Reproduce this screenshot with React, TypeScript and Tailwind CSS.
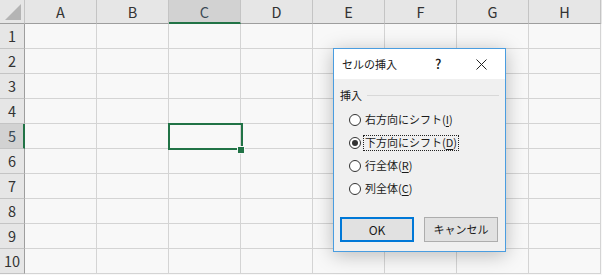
import React from "react"

const COLUMNS = ["A", "B", "C", "D", "E", "F", "G", "H"]
const ROWS = [1, 2, 3, 4, 5, 6, 7, 8, 9, 10]

const OPTIONS = [
  { label: "右方向にシフト", key: "I", checked: false },
  { label: "下方向にシフト", key: "D", checked: true },
  { label: "行全体", key: "R", checked: false },
  { label: "列全体", key: "C", checked: false },
]

const FONT = "font-['Noto_Sans_CJK_JP','Noto_Sans',sans-serif]"

function ColumnHeader({ name }: { name: string }) {
  const active = name === "C"
  return (
    <div
      className={
        active
          ? "flex h-full w-[72px] shrink-0 items-center justify-center border-r border-r-[#c4c4c4] border-b-2 border-b-[#217346] bg-[#d2d2d2] pt-[2px] text-[14.5px] text-[#3b4a55]"
          : "flex h-full w-[72px] shrink-0 items-center justify-center border-r border-r-[#c4c4c4] border-b border-b-[#9e9e9e] text-[14.5px] text-[#333]"
      }
    >
      {name}
    </div>
  )
}

function Sheet() {
  return (
    <div className={`flex flex-col bg-[#f8f8f8] ${FONT}`}>
      {/* column headers */}
      <div className="flex h-[24px] bg-[#e6e6e6]">
        <div className="flex h-full w-[25px] shrink-0 items-end justify-end border-r border-b border-r-[#c4c4c4] border-b-[#9e9e9e] pr-[2px] pb-[2px]">
          <svg width="17" height="17" viewBox="0 0 17 17">
            <polygon points="16,0 16,16 0,16" fill="#b4b4b4" />
          </svg>
        </div>
        {COLUMNS.map((c) => (
          <ColumnHeader key={c} name={c} />
        ))}
      </div>

      {/* rows */}
      {ROWS.map((r) => {
        const active = r === 5
        return (
          <div key={r} className="flex h-[25px]">
            <div
              className={
                active
                  ? "flex h-full w-[25px] shrink-0 items-center justify-center border-b border-b-[#c4c4c4] border-r-2 border-r-[#217346] bg-[#d2d2d2] pl-[1px] text-[14.5px] text-[#3b4a55]"
                  : "flex h-full w-[25px] shrink-0 items-center justify-center border-b border-b-[#c4c4c4] border-r border-r-[#9e9e9e] bg-[#e6e6e6] text-[14.5px] text-[#333]"
              }
            >
              {r}
            </div>
            {COLUMNS.map((c) => (
              <div key={c} className="h-full w-[72px] shrink-0 border-r border-b border-[#d4d4d4]" />
            ))}
          </div>
        )
      })}
    </div>
  )
}

function Radio({ checked }: { checked: boolean }) {
  return (
    <span className="flex h-[12px] w-[12px] shrink-0 items-center justify-center rounded-full border border-[#333] bg-white">
      {checked && <span className="h-[6px] w-[6px] rounded-full bg-[#333]" />}
    </span>
  )
}

function InsertDialog() {
  return (
    <div
      className={`absolute left-[333px] top-[48px] flex h-[204px] w-[173px] flex-col border border-[#4a9de0] bg-[#f0f0f0] text-[11px] text-[#1a1a1a] shadow-[0_3px_18px_rgba(0,0,0,0.25)] ${FONT}`}
    >
      {/* title bar */}
      <div className="flex h-[30px] items-center bg-white pl-[8px]">
        <span className="text-[11px]">セルの挿入</span>
        <span className="ml-[38px] text-[13px] font-medium">?</span>
        <svg className="ml-[35px]" width="11" height="11" viewBox="0 0 11 11">
          <path d="M0.5 0.5 L10.5 10.5 M10.5 0.5 L0.5 10.5" stroke="#222" strokeWidth="1" />
        </svg>
      </div>

      {/* body */}
      <div className="flex flex-1 flex-col px-[6px] pt-[8px] pb-[9px]">
        <div className="flex h-[16px] items-center">
          <span>挿入</span>
          <span className="ml-[5px] h-px flex-1 bg-[#d8d8d8]" />
        </div>

        <div className="mt-[5px] flex flex-col pl-[9px]">
          {OPTIONS.map((o) => (
            <div key={o.key} className="flex h-[23px] items-center">
              <Radio checked={o.checked} />
              <span
                className={
                  o.checked
                    ? "ml-[2px] flex h-[16px] items-center border border-dotted border-[#222] px-[1px]"
                    : "ml-[2px] flex h-[16px] items-center border border-transparent px-[1px]"
                }
              >
                {o.label}(<span className="underline underline-offset-2">{o.key}</span>)
              </span>
            </div>
          ))}
        </div>

        <div className="mt-auto flex gap-[10px] pr-[1px]">
          <button
            type="button"
            className="flex h-[25px] w-[74px] items-center justify-center border-2 border-[#0078d7] bg-[#e1e1e1] text-[12px]"
          >
            OK
          </button>
          <button
            type="button"
            className="flex h-[25px] w-[74px] items-center justify-center border border-[#adadad] bg-[#e1e1e1] text-[11px]"
          >
            キャンセル
          </button>
        </div>
      </div>
    </div>
  )
}

export default function App() {
  return (
    <div className="relative h-[275px] w-[602px] overflow-hidden bg-[#f8f8f8]">
      <Sheet />

      {/* active cell C5 */}
      <div className="absolute left-[168px] top-[123px] h-[27px] w-[75px] border-2 border-[#217346]" />
      <div className="absolute left-[238px] top-[147px] h-[6px] w-[6px] bg-[#217346] outline outline-1 outline-[#f8f8f8]" />

      <InsertDialog />
    </div>
  )
}
